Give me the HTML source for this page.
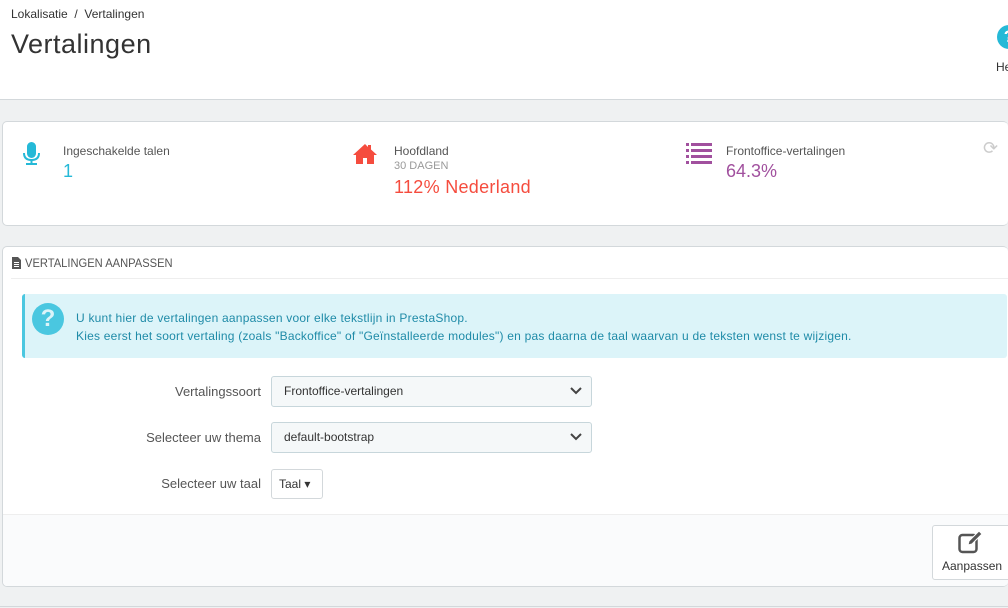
<!DOCTYPE html>
<html><head><meta charset="utf-8"><style>
*{box-sizing:border-box;margin:0;padding:0}
body{width:1008px;height:608px;overflow:hidden;background:#eff1f2;font-family:"Liberation Sans",sans-serif;color:#555;position:relative}
.abs{position:absolute}
.hdr{left:0;top:0;width:1008px;height:100px;background:#fff;border-bottom:1px solid #d3d8db}
.panel{background:#fff;border:1px solid #d3d8db;border-radius:5px;border-right:none}
.lbl{font-size:12px;color:#555}
.sel{background:#f5f8f9;border:1px solid #c7d6db;border-radius:3px;font-size:12px;color:#333;padding-left:12px;line-height:29px}
</style></head><body>
<div class="abs hdr">
 <div class="abs" style="left:11px;top:7px;font-size:12px;color:#333">Lokalisatie &nbsp;/&nbsp; Vertalingen</div>
 <div class="abs" style="left:11px;top:29px;font-size:27px;color:#333;letter-spacing:.5px">Vertalingen</div>
 <div class="abs" style="left:997px;top:25px;width:24px;height:24px;border-radius:50%;background:#25b9d7;color:#fff;font-weight:bold;font-size:17px;line-height:24px;text-align:center">?</div>
 <div class="abs" style="left:996px;top:60px;font-size:12px;color:#333">He</div>
</div>
<div class="abs panel" style="left:2px;top:121px;width:1006px;height:105px">
 <svg class="abs" style="left:19px;top:20px" width="20" height="25" viewBox="0 0 20 25"><rect x="5" y="0" width="9" height="16" rx="4.5" fill="#25b9d7"/><path d="M2 11q0 7 7.5 7t7.5-7" stroke="#25b9d7" stroke-width="2" fill="none"/><rect x="8.5" y="18" width="2" height="4" fill="#25b9d7"/><rect x="4" y="21" width="11" height="2" fill="#25b9d7"/></svg>
 <div class="abs lbl" style="left:60px;top:22px">Ingeschakelde talen</div>
 <div class="abs" style="left:60px;top:39px;font-size:18px;color:#25b9d7">1</div>
 <svg class="abs" style="left:350px;top:22px" width="24" height="20" viewBox="0 0 24 20"><path d="M12 0L0 11h3v9h7v-6h4v6h7v-9h3L18 5.5V1h-3v2z" fill="#f54c3e"/></svg>
 <div class="abs lbl" style="left:391px;top:22px">Hoofdland</div>
 <div class="abs" style="left:391px;top:38px;font-size:11px;color:#999">30 DAGEN</div>
 <div class="abs" style="left:391px;top:55px;font-size:18px;color:#f54c3e;letter-spacing:.3px">112% Nederland</div>
 <svg class="abs" style="left:683px;top:21px" width="26" height="22" viewBox="0 0 26 22"><g fill="#a1509e"><rect x="0" y="0" width="3" height="3"/><rect x="5" y="0" width="21" height="3"/><rect x="0" y="6" width="3" height="3"/><rect x="5" y="6" width="21" height="3"/><rect x="0" y="12" width="3" height="3"/><rect x="5" y="12" width="21" height="3"/><rect x="0" y="18" width="3" height="3"/><rect x="5" y="18" width="21" height="3"/></g></svg>
 <div class="abs lbl" style="left:723px;top:22px">Frontoffice-vertalingen</div>
 <div class="abs" style="left:723px;top:39px;font-size:18px;color:#a1509e">64.3%</div>
 <div class="abs" style="left:980px;top:16px;font-size:18px;color:#ccc">⟳</div>
</div>
<div class="abs panel" style="left:2px;top:246px;width:1006px;height:341px;overflow:hidden">
 <div class="abs" style="left:8px;top:0;width:1000px;height:32px;border-bottom:1px solid #eee"></div>
 <svg class="abs" style="left:9px;top:10px" width="9" height="12" viewBox="0 0 9 12"><path d="M0 0h6l3 3v9H0z" fill="#555"/><g fill="#fff"><rect x="2" y="5" width="5" height="1"/><rect x="2" y="7" width="5" height="1"/><rect x="2" y="9" width="5" height="1"/></g></svg>
 <div class="abs" style="left:22px;top:9px;font-size:12px;color:#555;transform:scaleX(.93);transform-origin:left">VERTALINGEN AANPASSEN</div>
 <div class="abs" style="left:19px;top:47px;width:985px;height:64px;background:#dcf4f9;border-left:3px solid #4ac7e0;border-radius:3px"></div>
 <div class="abs" style="left:29px;top:56px;width:32px;height:32px;border-radius:50%;background:#4ac7e0;color:#dcf4f9;font-weight:bold;font-size:24px;text-align:center;line-height:32px">?</div>
 <div class="abs" style="left:73px;top:62px;font-size:12px;color:#1f8ba8;line-height:18px;letter-spacing:.22px">U kunt hier de vertalingen aanpassen voor elke tekstlijn in PrestaShop.<br>Kies eerst het soort vertaling (zoals "Backoffice" of "Geïnstalleerde modules") en pas daarna de taal waarvan u de teksten wenst te wijzigen.</div>
 <div class="abs" style="left:0;width:258px;top:137px;text-align:right;font-size:13px;color:#555">Vertalingssoort</div>
 <div class="abs sel" style="left:268px;top:129px;width:321px;height:31px">Frontoffice-vertalingen</div>
 <div class="abs" style="left:0;width:258px;top:183px;text-align:right;font-size:13px;color:#555">Selecteer uw thema</div>
 <div class="abs sel" style="left:268px;top:175px;width:321px;height:31px">default-bootstrap</div>
 <svg class="abs" style="left:566px;top:139px" width="14" height="10"><path d="M2 2l5 5 5-5" stroke="#444" stroke-width="2" fill="none"/></svg>
 <svg class="abs" style="left:566px;top:185px" width="14" height="10"><path d="M2 2l5 5 5-5" stroke="#444" stroke-width="2" fill="none"/></svg>
 <div class="abs" style="left:0;width:258px;top:229px;text-align:right;font-size:13px;color:#555">Selecteer uw taal</div>
 <div class="abs" style="left:268px;top:222px;width:52px;height:30px;border:1px solid #d3d8db;border-radius:3px;background:#fff;font-size:12px;color:#333;line-height:28px;padding-left:7px">Taal ▾</div>
 <div class="abs" style="left:0;top:267px;width:1006px;height:74px;background:#fafbfc;border-top:1px solid #eee"></div>
 <div class="abs" style="left:929px;top:278px;width:80px;height:55px;background:#fff;border:1px solid #d3d8db;border-radius:3px"></div>
 <svg class="abs" style="left:955px;top:283px" width="30" height="24" viewBox="0 0 30 24"><rect x="1.5" y="5" width="17" height="17" rx="3" stroke="#555" stroke-width="2.5" fill="none"/><path d="M10 15l1-4 10-10 3 3-10 10z" fill="#555" stroke="#fff" stroke-width="1"/></svg>
 <div class="abs" style="left:939px;top:312px;font-size:12px;color:#333">Aanpassen</div>
</div>
<div class="abs" style="left:0;top:606px;width:1008px;height:1px;background:#d3d8db"></div>
</body></html>
